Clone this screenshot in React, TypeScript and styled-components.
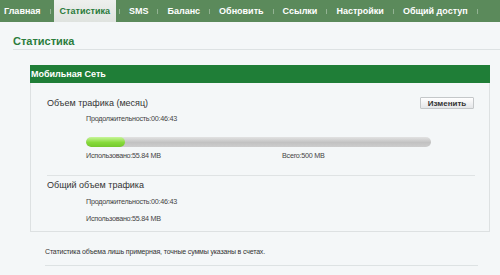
import React from "react";
import styled, { createGlobalStyle } from "styled-components";

const Global = createGlobalStyle`
  html, body { margin: 0; padding: 0; background: #f4f7f8; }
  body { font-family: "Liberation Sans", Arial, sans-serif; color: #333; }
`;

const Page = styled.div`
  width: 500px;
  height: 275px;
  overflow: hidden;
  background: #f4f7f8;
`;

const Nav = styled.nav`
  display: flex;
  align-items: stretch;
  height: 22px;
  background: #5b8a5b;
`;

const NavItem = styled.div<{ $active?: boolean }>`
  display: flex;
  align-items: center;
  padding: 0 6px;
  font-size: 9px;
  font-weight: bold;
  color: ${(p) => (p.$active ? "#2a7a3a" : "#ffffff")};
  background: ${(p) => (p.$active ? "linear-gradient(#eef0ee, #dfe3df)" : "transparent")};
  white-space: nowrap;
  &:first-child { padding-left: 4px; }
`;

const NavSep = styled.span`
  align-self: center;
  width: 1px;
  height: 5px;
  margin: 0 3px;
  background: #93b393;
`;

const Heading = styled.h1`
  margin: 12px 0 0 13px;
  padding-bottom: 1px;
  height: 14px;
  line-height: 14px;
  font-size: 11px;
  font-weight: bold;
  color: #2b7d3c;
  border-bottom: 1px solid #dde2e3;
`;

const Panel = styled.section`
  margin: 15px 0 0 30px;
  width: 458px;
  border: 1px solid #dde1e2;
  border-top: none;
`;

const PanelHeader = styled.div`
  height: 18px;
  line-height: 18px;
  margin: 0 -1px;
  padding-left: 1px;
  background: #1f7e37;
  color: #fff;
  font-size: 9px;
  font-weight: bold;
`;

const PanelBody = styled.div`
  padding: 0 14px 6px 16px;
`;

const TitleRow = styled.div<{ $top: number }>`
  display: flex;
  justify-content: space-between;
  align-items: center;
  height: 14px;
  margin-top: ${(p) => p.$top}px;
`;

const SectionTitle = styled.span`
  font-size: 9px;
  line-height: 14px;
  color: #333;
`;

const Button = styled.button`
  height: 12px;
  width: 54px;
  margin-right: 1px;
  padding: 0;
  font-family: "Liberation Sans", Arial, sans-serif;
  font-size: 8px;
  font-weight: bold;
  color: #333;
  border: 1px solid #c4c7c9;
  border-radius: 1px;
  background: linear-gradient(#ffffff, #e4e6e8);
`;

const Details = styled.div`
  padding-left: 39px;
`;

const InfoLine = styled.div<{ $top: number }>`
  display: flex;
  height: 12px;
  line-height: 12px;
  margin-top: ${(p) => p.$top}px;
  font-size: 7.2px;
  color: #444;
  letter-spacing: -0.25px;
`;

const InfoCell = styled.span<{ $w?: number }>`
  width: ${(p) => (p.$w ? `${p.$w}px` : "auto")};
`;

const Bar = styled.div`
  margin-top: 12px;
  width: 345px;
  height: 10px;
  border-radius: 5px;
  background: linear-gradient(#e2e2e2, #c2c2c2 55%, #cdcdcd);
  overflow: hidden;
`;

const BarFill = styled.div`
  height: 100%;
  border-radius: 5px;
  background: linear-gradient(#c8f59a, #86da3a 55%, #74c82c);
`;

const Divider = styled.hr`
  margin: 13px 0 0;
  border: none;
  height: 1px;
  background: #dfe3e4;
`;

const Note = styled.p`
  margin: 14px 0 0 45px;
  width: 433px;
  padding-bottom: 7px;
  line-height: 12px;
  font-size: 7px;
  letter-spacing: -0.16px;
  color: #333;
  border-bottom: 1px solid #dde2e3;
`;

const navItems = ["Главная", "Статистика", "SMS", "Баланс", "Обновить", "Ссылки", "Настройки", "Общий доступ"];

export default function App() {
  const used = 55.84;
  const total = 500;
  return (
    <Page>
      <Global />
      <Nav>
        {navItems.map((n, i) => (
          <React.Fragment key={n}>
            <NavItem $active={i === 1}>{n}</NavItem>
            <NavSep />
          </React.Fragment>
        ))}
      </Nav>
      <Heading>Статистика</Heading>
      <Panel>
        <PanelHeader>Мобильная Сеть</PanelHeader>
        <PanelBody>
          <TitleRow $top={13}>
            <SectionTitle>Объем трафика (месяц)</SectionTitle>
            <Button>Изменить</Button>
          </TitleRow>
          <Details>
            <InfoLine $top={3}>Продолжительность:00:46:43</InfoLine>
            <Bar>
              <BarFill style={{ width: `${(used / total) * 100}%` }} />
            </Bar>
            <InfoLine $top={3}>
              <InfoCell $w={196}>Использовано:55.84 MB</InfoCell>
              <InfoCell>Всего:500 MB</InfoCell>
            </InfoLine>
          </Details>
          <Divider />
          <TitleRow $top={2}>
            <SectionTitle>Общий объем трафика</SectionTitle>
          </TitleRow>
          <Details>
            <InfoLine $top={4}>Продолжительность:00:46:43</InfoLine>
            <InfoLine $top={5}>Использовано:55.84 MB</InfoLine>
          </Details>
        </PanelBody>
      </Panel>
      <Note>Статистика объема лишь примерная, точные суммы указаны в счетах.</Note>
    </Page>
  );
}
